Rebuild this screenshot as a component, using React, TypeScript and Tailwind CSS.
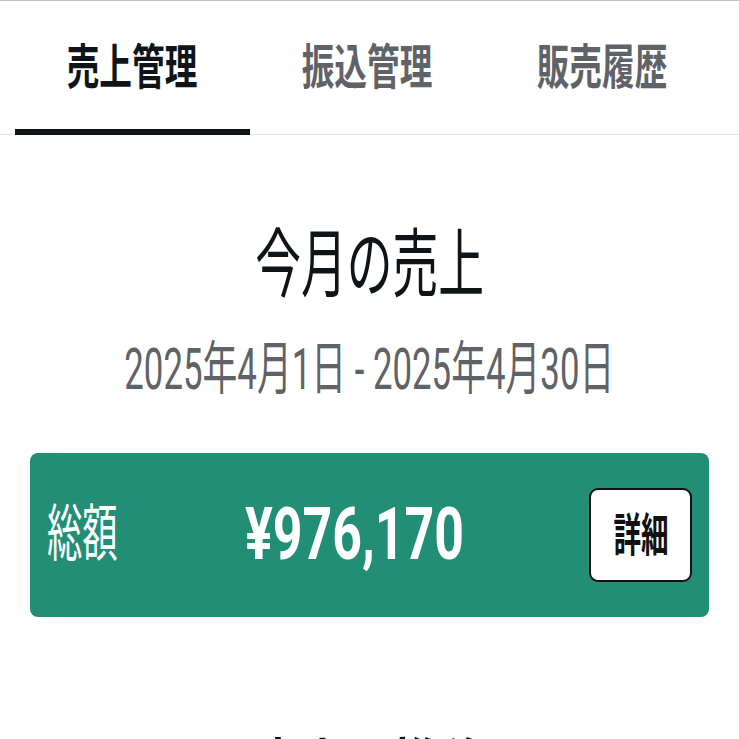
const jp = "font-['Roboto','Noto_Sans_CJK_JP',sans-serif]";

const tabs = ["売上管理", "振込管理", "販売履歴"];

function Tabs({ active }: { active: number }) {
  return (
    <div className="border-b border-[#e3e3e3]">
      <div className="ml-[15px] mr-[19px] grid grid-cols-3">
        {tabs.map((t, i) => (
          <div
            key={t}
            className={
              "flex h-[134px] items-center justify-center -mb-px " +
              (i === active ? "border-b-[6px] border-[#0f1419] pt-[6px]" : "")
            }
          >
            <span
              className={
                "inline-block scale-x-[0.68] text-[48px] font-bold leading-none " +
                (i === active ? "text-[#0f1419]" : "text-[#5f6368]")
              }
            >
              {t}
            </span>
          </div>
        ))}
      </div>
    </div>
  );
}

export default function App() {
  return (
    <div className={`min-h-screen overflow-hidden bg-white ${jp}`}>
      <div className="border-t border-[#bdbdbd]" />
      <Tabs active={0} />

      <div className="px-[30px]">
        <div className="mt-[93px] flex justify-center">
          <span className="inline-block shrink-0 scale-x-[0.61] text-[75px] font-normal leading-none text-[#0f1419]">
            今月の売上
          </span>
        </div>
        <div className="mt-[37px] flex justify-center">
          <span className="inline-block shrink-0 scale-x-[0.6] text-[58px] leading-none text-[#5f6368] whitespace-nowrap">
            2025年4月1日 - 2025年4月30日
          </span>
        </div>

        <div className="mt-[55px] flex h-[164px] items-center rounded-[8px] bg-[#238e76] pl-[17px] pr-[17px]">
          <div className="w-[198px] shrink-0">
            <span className="inline-block origin-left scale-x-[0.57] text-[62px] leading-none text-white">
              総額
            </span>
          </div>
          <span className="inline-block origin-left scale-x-[0.72] text-[72px] font-bold leading-none text-white whitespace-nowrap">
            ¥976,170
          </span>
          <button className="ml-auto flex h-[94px] w-[103px] shrink-0 items-center justify-center rounded-[9px] border-[2.5px] border-[#111] bg-white">
            <span className="inline-block scale-x-[0.6] text-[46px] font-bold leading-none text-[#111]">
              詳細
            </span>
          </button>
        </div>

        <div className="mt-[121px] flex justify-center">
          <span className="inline-block shrink-0 scale-x-[0.61] text-[75px] font-bold leading-none text-[#0f1419]">
            売上の推移
          </span>
        </div>
      </div>
    </div>
  );
}
